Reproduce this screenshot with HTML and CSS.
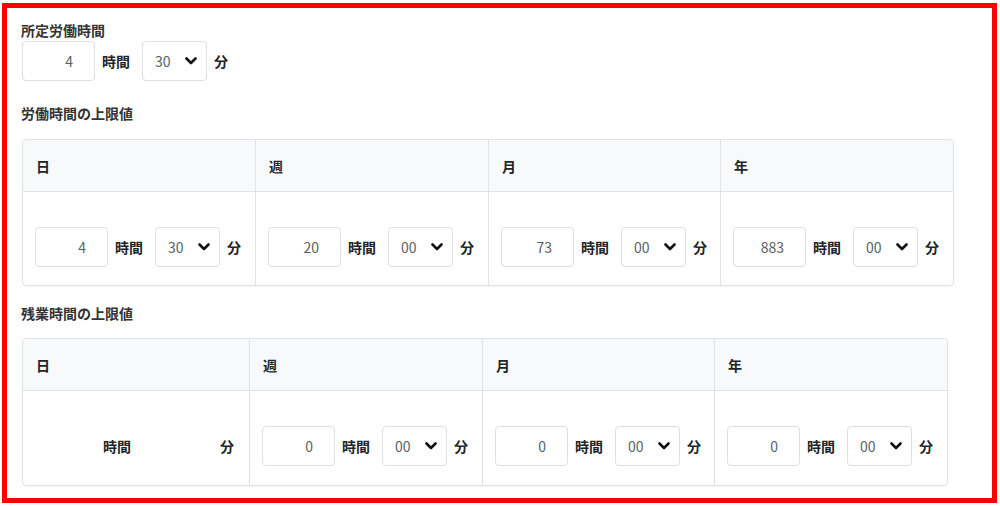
FILE: index.html
```html
<!DOCTYPE html>
<html lang="ja">
<head>
    <meta charset="UTF-8">
    <title>労働時間設定</title>
    <link rel="stylesheet" href="styles.css">
</head>
<body>
    <div class="frame">
        <div class="field-label">所定労働時間</div>
        <div class="time-row top-row">
            <input class="num-input" type="text" value="4">
            <span class="unit">時間</span>
            <div class="select-wrap">
                <select class="min-select"><option>30</option></select>
                <svg class="chev" width="12" height="8" viewBox="0 0 12 8"><path d="M1.5 1.5 L6 6 L10.5 1.5" fill="none" stroke="#111" stroke-width="2.6" stroke-linecap="round" stroke-linejoin="round"/></svg>
            </div>
            <span class="unit unit-min">分</span>
        </div>

        <div class="field-label label-work">労働時間の上限値</div>
        <div class="limit-table table-work">
            <div class="th">日</div>
            <div class="th">週</div>
            <div class="th">月</div>
            <div class="th">年</div>

            <div class="td">
                <div class="time-row">
                    <input class="num-input" type="text" value="4">
                    <span class="unit">時間</span>
                    <div class="select-wrap">
                        <select class="min-select"><option>30</option></select>
                        <svg class="chev" width="12" height="8" viewBox="0 0 12 8"><path d="M1.5 1.5 L6 6 L10.5 1.5" fill="none" stroke="#111" stroke-width="2.6" stroke-linecap="round" stroke-linejoin="round"/></svg>
                    </div>
                    <span class="unit unit-min">分</span>
                </div>
            </div>
            <div class="td">
                <div class="time-row">
                    <input class="num-input" type="text" value="20">
                    <span class="unit">時間</span>
                    <div class="select-wrap">
                        <select class="min-select"><option>00</option></select>
                        <svg class="chev" width="12" height="8" viewBox="0 0 12 8"><path d="M1.5 1.5 L6 6 L10.5 1.5" fill="none" stroke="#111" stroke-width="2.6" stroke-linecap="round" stroke-linejoin="round"/></svg>
                    </div>
                    <span class="unit unit-min">分</span>
                </div>
            </div>
            <div class="td">
                <div class="time-row">
                    <input class="num-input" type="text" value="73">
                    <span class="unit">時間</span>
                    <div class="select-wrap">
                        <select class="min-select"><option>00</option></select>
                        <svg class="chev" width="12" height="8" viewBox="0 0 12 8"><path d="M1.5 1.5 L6 6 L10.5 1.5" fill="none" stroke="#111" stroke-width="2.6" stroke-linecap="round" stroke-linejoin="round"/></svg>
                    </div>
                    <span class="unit unit-min">分</span>
                </div>
            </div>
            <div class="td">
                <div class="time-row">
                    <input class="num-input" type="text" value="883">
                    <span class="unit">時間</span>
                    <div class="select-wrap">
                        <select class="min-select"><option>00</option></select>
                        <svg class="chev" width="12" height="8" viewBox="0 0 12 8"><path d="M1.5 1.5 L6 6 L10.5 1.5" fill="none" stroke="#111" stroke-width="2.6" stroke-linecap="round" stroke-linejoin="round"/></svg>
                    </div>
                    <span class="unit unit-min">分</span>
                </div>
            </div>
        </div>

        <div class="field-label label-over">残業時間の上限値</div>
        <div class="limit-table table-over">
            <div class="th">日</div>
            <div class="th">週</div>
            <div class="th">月</div>
            <div class="th">年</div>

            <div class="td">
                <div class="time-row">
                    <span class="blank blank-input"></span>
                    <span class="unit">時間</span>
                    <span class="blank blank-select"></span>
                    <span class="unit unit-min">分</span>
                </div>
            </div>
            <div class="td">
                <div class="time-row">
                    <input class="num-input" type="text" value="0">
                    <span class="unit">時間</span>
                    <div class="select-wrap">
                        <select class="min-select"><option>00</option></select>
                        <svg class="chev" width="12" height="8" viewBox="0 0 12 8"><path d="M1.5 1.5 L6 6 L10.5 1.5" fill="none" stroke="#111" stroke-width="2.6" stroke-linecap="round" stroke-linejoin="round"/></svg>
                    </div>
                    <span class="unit unit-min">分</span>
                </div>
            </div>
            <div class="td">
                <div class="time-row">
                    <input class="num-input" type="text" value="0">
                    <span class="unit">時間</span>
                    <div class="select-wrap">
                        <select class="min-select"><option>00</option></select>
                        <svg class="chev" width="12" height="8" viewBox="0 0 12 8"><path d="M1.5 1.5 L6 6 L10.5 1.5" fill="none" stroke="#111" stroke-width="2.6" stroke-linecap="round" stroke-linejoin="round"/></svg>
                    </div>
                    <span class="unit unit-min">分</span>
                </div>
            </div>
            <div class="td">
                <div class="time-row">
                    <input class="num-input" type="text" value="0">
                    <span class="unit">時間</span>
                    <div class="select-wrap">
                        <select class="min-select"><option>00</option></select>
                        <svg class="chev" width="12" height="8" viewBox="0 0 12 8"><path d="M1.5 1.5 L6 6 L10.5 1.5" fill="none" stroke="#111" stroke-width="2.6" stroke-linecap="round" stroke-linejoin="round"/></svg>
                    </div>
                    <span class="unit unit-min">分</span>
                </div>
            </div>
        </div>
    </div>
</body>
</html>
```

FILE: styles.css
```css
body {
    margin: 0;
    background-color: #ffffff;
    font-family: "Noto Sans CJK JP", "Noto Sans", sans-serif;
    color: #212529;
}
.frame {
    box-sizing: border-box;
    width: 995px;
    height: 500px;
    margin: 3px 0 0 2px;
    border: 5px solid #ff0000;
    padding: 12px 0 0 14px;
}
.field-label {
    font-size: 14px;
    font-weight: 600;
    line-height: 20px;
    color: #333;
}
.label-work {
    margin-top: 22px;
    margin-bottom: 16px;
}
.label-over {
    margin-top: 17px;
    margin-bottom: 15px;
}
.time-row {
    display: flex;
    align-items: center;
}
.top-row {
    margin-top: 1px;
    margin-left: 1px;
}
.num-input {
    box-sizing: border-box;
    width: 73px;
    height: 40px;
    border: 1px solid #dcdfe3;
    border-radius: 4px;
    padding: 0 21px 0 8px;
    text-align: right;
    font-family: inherit;
    font-size: 14px;
    color: #5a5f66;
    background: #fff;
    outline: none;
}
.unit {
    font-size: 14px;
    font-weight: bold;
    margin-left: 7px;
    margin-right: 12px;
    line-height: 20px;
}
.unit-min {
    margin-left: 7px;
    margin-right: 0;
}
.select-wrap {
    position: relative;
    width: 65px;
    height: 40px;
}
.min-select {
    -webkit-appearance: none;
    appearance: none;
    box-sizing: border-box;
    width: 65px;
    height: 40px;
    border: 1px solid #dcdfe3;
    border-radius: 4px;
    padding: 0 0 0 12px;
    font-family: inherit;
    font-size: 14px;
    color: #5a5f66;
    background: #fff;
    outline: none;
}
.chev {
    position: absolute;
    right: 10px;
    top: 16px;
    pointer-events: none;
}
.limit-table {
    display: grid;
    border: 1px solid #dee2e6;
    border-radius: 4px;
    overflow: hidden;
    box-shadow: 0 1px 1px rgba(0,0,0,0.04);
    margin-left: 1px;
}
.table-work {
    width: 930px;
    grid-template-columns: 232px 233px 232px 233px;
}
.table-over {
    width: 924px;
    grid-template-columns: 226px 233px 232px 233px;
}
.th {
    height: 52px;
    box-sizing: border-box;
    padding: 0 13px;
    display: flex;
    align-items: center;
    font-size: 14px;
    font-weight: bold;
    background-color: #f8f9fa;
    border-bottom: 1px solid #dee2e6;
    border-left: 1px solid #dee2e6;
}
.td {
    height: 93px;
    box-sizing: border-box;
    padding: 35px 0 0 12px;
    border-left: 1px solid #dee2e6;
}
.table-over .td {
    height: 94px;
}
.th:first-child,
.th + .th + .th + .th + .td {
    border-left: none;
}
.blank {
    display: inline-block;
    height: 40px;
}
.blank-input {
    width: 61px;
}
.blank-select {
    width: 70px;
}
```
